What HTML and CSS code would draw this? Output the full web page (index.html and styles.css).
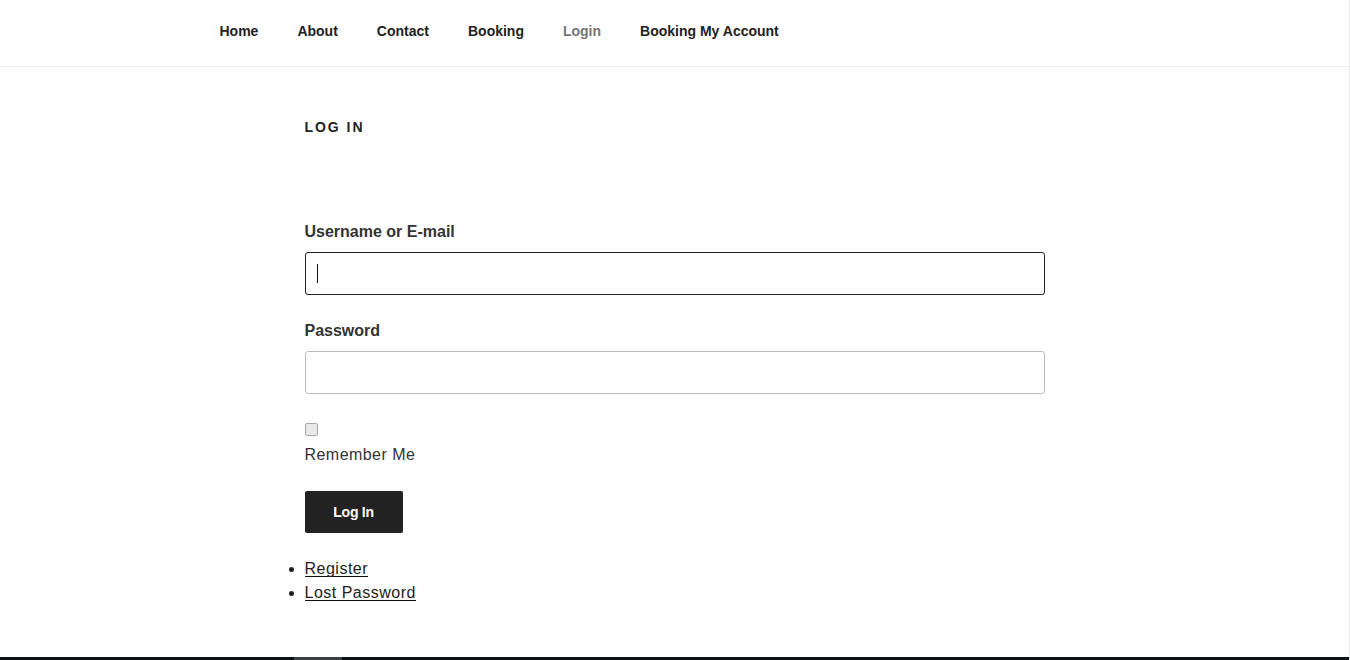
FILE: index.html
```html
<!DOCTYPE html>
<html lang="en">
<head>
<meta charset="utf-8">
<title>Log In</title>
<link rel="stylesheet" href="styles.css">
</head>
<body>
<div class="page">
  <header class="site-header">
    <nav class="nav-wrap">
      <ul class="menu">
        <li><a href="#">Home</a></li>
        <li><a href="#">About</a></li>
        <li><a href="#">Contact</a></li>
        <li><a href="#">Booking</a></li>
        <li><a href="#" class="current">Login</a></li>
        <li><a href="#">Booking My Account</a></li>
      </ul>
    </nav>
  </header>
  <main class="content">
    <h1 class="page-title">Log In</h1>
    <form class="login-form">
      <label class="field-label" for="user">Username or E-mail</label>
      <div class="input-wrap">
        <input id="user" class="text-input focused" type="text">
        <span class="caret"></span>
      </div>
      <label class="field-label" for="pass">Password</label>
      <div class="input-wrap">
        <input id="pass" class="text-input" type="password">
      </div>
      <div class="remember">
        <input type="checkbox" class="check" id="rem">
        <label for="rem" class="remember-label">Remember Me</label>
      </div>
      <button type="button" class="btn">Log In</button>
    </form>
    <ul class="links">
      <li><a href="#">Register</a></li>
      <li><a href="#">Lost Password</a></li>
    </ul>
  </main>
  <footer class="bottom-bar"><span class="bar-seg"></span></footer>
</div>
</body>
</html>
```

FILE: styles.css
```css
* { box-sizing: border-box; }
html, body { margin: 0; padding: 0; }
body {
  font-family: "Liberation Sans", Arial, sans-serif;
  color: #222;
  background: #fff;
}
.page {
  height: 100vh;
  display: flex;
  flex-direction: column;
  border-right: 1px solid #e8e8e8;
  overflow: hidden;
}
.site-header {
  height: 67px;
  border-bottom: 1px solid #eee;
  flex: none;
}
.nav-wrap {
  max-width: 1000px;
  margin: 0 auto;
  padding: 0 45px;
  height: 100%;
}
.menu {
  list-style: none;
  margin: 0;
  padding: 0;
  display: flex;
  gap: 39px;
  height: 100%;
  align-items: center;
  padding-bottom: 4px;
}
.menu a {
  font-size: 14px;
  line-height: 20px;
  font-weight: 700;
  color: #222;
  text-decoration: none;
}
.menu a.current { color: #767676; }
.content {
  flex: 1;
  width: 740px;
  margin: 0 auto;
  padding-top: 50px;
}
.page-title {
  margin: 0;
  font-size: 14px;
  line-height: 20px;
  font-weight: 800;
  letter-spacing: 0.14em;
  text-transform: uppercase;
  color: #222;
}
.login-form {
  margin-top: 83px;
  display: flex;
  flex-direction: column;
  align-items: flex-start;
}
.field-label {
  font-size: 16px;
  line-height: 24px;
  font-weight: 700;
  color: #333;
  margin-bottom: 8px;
}
.input-wrap {
  position: relative;
  width: 100%;
  margin-bottom: 24px;
}
.text-input {
  display: block;
  width: 100%;
  height: 43px;
  border: 1px solid #bbb;
  border-radius: 3px;
  background: #fff;
  padding: 0 12px;
  font: inherit;
  outline: none;
}
.text-input.focused { border-color: #222; }
.caret {
  position: absolute;
  left: 12px;
  top: 12px;
  width: 1px;
  height: 19px;
  background: #111;
}
.remember {
  margin-top: 5px;
  display: flex;
  flex-direction: column;
  align-items: flex-start;
  gap: 7px;
}
.check {
  appearance: none;
  -webkit-appearance: none;
  margin: 0;
  width: 13px;
  height: 13px;
  border: 1px solid #a8a8a8;
  border-radius: 2px;
  background: #e9e9e9;
}
.remember-label {
  font-size: 16px;
  line-height: 24px;
  color: #333;
  letter-spacing: 0.45px;
}
.btn {
  margin-top: 24px;
  width: 98px;
  height: 42px;
  border: 0;
  border-radius: 2px;
  background: #222;
  color: #fff;
  font-family: inherit;
  font-size: 14px;
  font-weight: 800;
  letter-spacing: -0.02em;
}
.links {
  margin: 24px 0 0;
  padding-left: 0;
  list-style: disc;
  font-size: 16px;
  line-height: 24px;
  letter-spacing: 0.5px;
}
.links a {
  color: #222;
  text-decoration: none;
  box-shadow: inset 0 -1px 0 #0f0f0f;
}
.bottom-bar {
  flex: none;
  height: 3px;
  background: #0b1215;
  display: flex;
  padding-left: 294px;
}
.bar-seg {
  width: 48px;
  background: #3b3f42;
}
```
